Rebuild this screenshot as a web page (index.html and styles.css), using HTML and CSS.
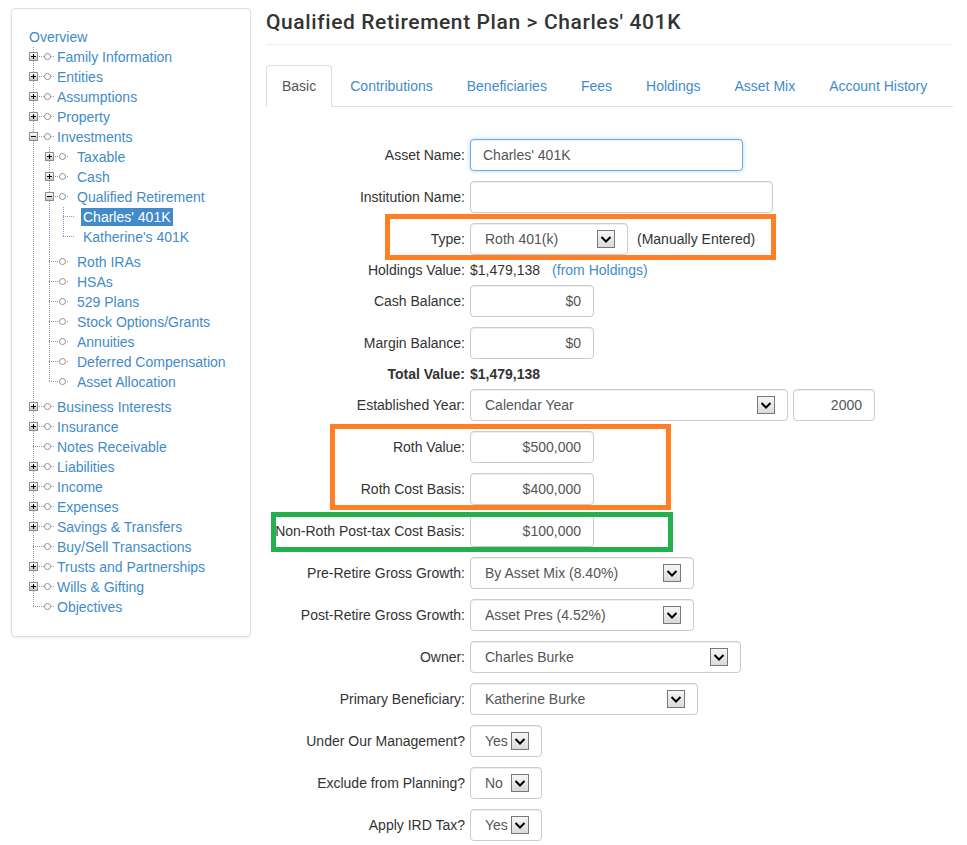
FILE: index.html
```html
<!DOCTYPE html>
<html lang="en">
<head>
    <meta charset="UTF-8">
    <meta name="viewport" content="width=device-width, initial-scale=1.0">
    <title>Qualified Retirement Plan - Charles' 401K</title>
    <link rel="stylesheet" href="styles.css">
</head>
<body>
<div class="page">
    <!-- Left navigation tree -->
    <nav class="sidebar">
        <a class="overview" href="#">Overview</a>
        <ul class="tree">
            <li><div class="node"><span class="lead"><i class="tog"></i><i class="knot"></i></span><a href="#">Family Information</a></div></li>
            <li><div class="node"><span class="lead"><i class="tog"></i><i class="knot"></i></span><a href="#">Entities</a></div></li>
            <li><div class="node"><span class="lead"><i class="tog"></i><i class="knot"></i></span><a href="#">Assumptions</a></div></li>
            <li><div class="node"><span class="lead"><i class="tog"></i><i class="knot"></i></span><a href="#">Property</a></div></li>
            <li>
                <div class="node"><span class="lead"><i class="tog open"></i><i class="knot"></i></span><a href="#">Investments</a></div>
                <ul>
                    <li><div class="node"><span class="lead"><i class="tog"></i><i class="knot"></i></span><a href="#">Taxable</a></div></li>
                    <li><div class="node"><span class="lead"><i class="tog"></i><i class="knot"></i></span><a href="#">Cash</a></div></li>
                    <li>
                        <div class="node"><span class="lead"><i class="tog open"></i><i class="knot"></i></span><a href="#">Qualified Retirement</a></div>
                        <ul>
                            <li><div class="node"><span class="lead"></span><a class="current" href="#">Charles' 401K</a></div></li>
                            <li><div class="node"><span class="lead"></span><a href="#">Katherine's 401K</a></div></li>
                        </ul>
                    </li>
                    <li><div class="node"><span class="lead"><i class="knot"></i></span><a href="#">Roth IRAs</a></div></li>
                    <li><div class="node"><span class="lead"><i class="knot"></i></span><a href="#">HSAs</a></div></li>
                    <li><div class="node"><span class="lead"><i class="knot"></i></span><a href="#">529 Plans</a></div></li>
                    <li><div class="node"><span class="lead"><i class="knot"></i></span><a href="#">Stock Options/Grants</a></div></li>
                    <li><div class="node"><span class="lead"><i class="knot"></i></span><a href="#">Annuities</a></div></li>
                    <li><div class="node"><span class="lead"><i class="knot"></i></span><a href="#">Deferred Compensation</a></div></li>
                    <li><div class="node"><span class="lead"><i class="knot"></i></span><a href="#">Asset Allocation</a></div></li>
                </ul>
            </li>
            <li><div class="node"><span class="lead"><i class="tog"></i><i class="knot"></i></span><a href="#">Business Interests</a></div></li>
            <li><div class="node"><span class="lead"><i class="tog"></i><i class="knot"></i></span><a href="#">Insurance</a></div></li>
            <li><div class="node"><span class="lead"><i class="knot"></i></span><a href="#">Notes Receivable</a></div></li>
            <li><div class="node"><span class="lead"><i class="tog"></i><i class="knot"></i></span><a href="#">Liabilities</a></div></li>
            <li><div class="node"><span class="lead"><i class="tog"></i><i class="knot"></i></span><a href="#">Income</a></div></li>
            <li><div class="node"><span class="lead"><i class="tog"></i><i class="knot"></i></span><a href="#">Expenses</a></div></li>
            <li><div class="node"><span class="lead"><i class="tog"></i><i class="knot"></i></span><a href="#">Savings &amp; Transfers</a></div></li>
            <li><div class="node"><span class="lead"><i class="knot"></i></span><a href="#">Buy/Sell Transactions</a></div></li>
            <li><div class="node"><span class="lead"><i class="tog"></i><i class="knot"></i></span><a href="#">Trusts and Partnerships</a></div></li>
            <li><div class="node"><span class="lead"><i class="tog"></i><i class="knot"></i></span><a href="#">Wills &amp; Gifting</a></div></li>
            <li><div class="node"><span class="lead"><i class="knot"></i></span><a href="#">Objectives</a></div></li>
        </ul>
    </nav>

    <main class="main">
        <h1 class="title">Qualified Retirement Plan &gt; Charles' 401K</h1>

        <ul class="tabs">
            <li class="active"><a href="#">Basic</a></li>
            <li><a href="#">Contributions</a></li>
            <li><a href="#">Beneficiaries</a></li>
            <li><a href="#">Fees</a></li>
            <li><a href="#">Holdings</a></li>
            <li><a href="#">Asset Mix</a></li>
            <li><a href="#">Account History</a></li>
        </ul>

        <form class="plan-form">
            <!-- review markers drawn over the form -->
            <div class="mark mark-type"></div>
            <div class="mark mark-roth"></div>
            <div class="mark green mark-nonroth"></div>

            <div class="field">
                <label>Asset Name:</label>
                <input class="ctl w-name focused" type="text" value="Charles' 401K">
            </div>
            <div class="field">
                <label>Institution Name:</label>
                <input class="ctl w-inst" type="text" value="">
            </div>
            <div class="field">
                <label>Type:</label>
                <div class="select w-type"><span class="value">Roth 401(k)</span><span class="caret"><svg viewBox="0 0 16 16" width="16" height="16"><path d="M3.5 6 8 10.5 12.5 6"/></svg></span></div>
                <span class="note">(Manually Entered)</span>
            </div>
            <div class="field static">
                <label>Holdings Value:</label>
                <span>$1,479,138</span>
                <a class="from" href="#">(from Holdings)</a>
            </div>
            <div class="field">
                <label>Cash Balance:</label>
                <input class="ctl num w-money" type="text" value="$0">
            </div>
            <div class="field">
                <label>Margin Balance:</label>
                <input class="ctl num w-money" type="text" value="$0">
            </div>
            <div class="field static total">
                <label>Total Value:</label>
                <span>$1,479,138</span>
            </div>
            <div class="field">
                <label>Established Year:</label>
                <div class="select w-basis"><span class="value">Calendar Year</span><span class="caret"><svg viewBox="0 0 16 16" width="16" height="16"><path d="M3.5 6 8 10.5 12.5 6"/></svg></span></div>
                <input class="ctl num w-year" type="text" value="2000">
            </div>
            <div class="field">
                <label>Roth Value:</label>
                <input class="ctl num w-money" type="text" value="$500,000">
            </div>
            <div class="field">
                <label>Roth Cost Basis:</label>
                <input class="ctl num w-money" type="text" value="$400,000">
            </div>
            <div class="field">
                <label>Non-Roth Post-tax Cost Basis:</label>
                <input class="ctl num w-money" type="text" value="$100,000">
            </div>
            <div class="field">
                <label>Pre-Retire Gross Growth:</label>
                <div class="select w-growth"><span class="value">By Asset Mix (8.40%)</span><span class="caret"><svg viewBox="0 0 16 16" width="16" height="16"><path d="M3.5 6 8 10.5 12.5 6"/></svg></span></div>
            </div>
            <div class="field">
                <label>Post-Retire Gross Growth:</label>
                <div class="select w-growth"><span class="value">Asset Pres (4.52%)</span><span class="caret"><svg viewBox="0 0 16 16" width="16" height="16"><path d="M3.5 6 8 10.5 12.5 6"/></svg></span></div>
            </div>
            <div class="field">
                <label>Owner:</label>
                <div class="select w-owner"><span class="value">Charles Burke</span><span class="caret"><svg viewBox="0 0 16 16" width="16" height="16"><path d="M3.5 6 8 10.5 12.5 6"/></svg></span></div>
            </div>
            <div class="field">
                <label>Primary Beneficiary:</label>
                <div class="select w-benef"><span class="value">Katherine Burke</span><span class="caret"><svg viewBox="0 0 16 16" width="16" height="16"><path d="M3.5 6 8 10.5 12.5 6"/></svg></span></div>
            </div>
            <div class="field">
                <label>Under Our Management?</label>
                <div class="select w-yn"><span class="value">Yes</span><span class="caret"><svg viewBox="0 0 16 16" width="16" height="16"><path d="M3.5 6 8 10.5 12.5 6"/></svg></span></div>
            </div>
            <div class="field">
                <label>Exclude from Planning?</label>
                <div class="select w-yn"><span class="value">No</span><span class="caret"><svg viewBox="0 0 16 16" width="16" height="16"><path d="M3.5 6 8 10.5 12.5 6"/></svg></span></div>
            </div>
            <div class="field">
                <label>Apply IRD Tax?</label>
                <div class="select w-yn"><span class="value">Yes</span><span class="caret"><svg viewBox="0 0 16 16" width="16" height="16"><path d="M3.5 6 8 10.5 12.5 6"/></svg></span></div>
            </div>
        </form>
    </main>
</div>
</body>
</html>
```

FILE: styles.css
```css
* {
    box-sizing: border-box;
}

body {
    margin: 0;
    background: #fff;
    color: #333;
    font-family: "Liberation Sans", Arial, sans-serif;
    font-size: 14px;
    line-height: 20px;
}

a {
    color: #428bca;
    text-decoration: none;
}

.page {
    display: flex;
    align-items: flex-start;
    gap: 15px;
    padding: 8px 14px 0 11px;
}

/* ---- sidebar tree ---- */

.sidebar {
    flex: none;
    width: 240px;
    border: 1px solid #ddd;
    border-radius: 4px;
    box-shadow: 0 1px 2px rgba(0, 0, 0, 0.08);
    padding: 18px 17px 19px;
}

.overview {
    display: block;
    line-height: 20px;
}

.tree,
.tree ul {
    list-style: none;
    margin: 0;
    padding: 0;
}

.tree li {
    background: repeating-linear-gradient(to bottom, #8c9db5 0 1px, transparent 1px 2px) 4px 0 / 1px 100% no-repeat;
}

.tree li:last-child {
    background-size: 1px 10px;
}

.tree ul {
    margin-left: 16px;
    padding-bottom: 5px;
}

.tree ul ul {
    margin-left: 14px;
}

.node {
    display: flex;
    align-items: flex-start;
    height: 20px;
}

.node a {
    margin-top: 1px;
    padding: 0 2px;
    line-height: 18px;
    white-space: nowrap;
}

.node a.current {
    background: #428bca;
    color: #fff;
}

.lead {
    flex: none;
    display: flex;
    align-items: flex-start;
    width: 26px;
    height: 20px;
    background: repeating-linear-gradient(to right, #8c9db5 0 1px, transparent 1px 2px) 4px 9px / 22px 1px no-repeat;
}

.tree ul .lead {
    width: 30px;
    background-size: 20px 1px;
}

.tree ul ul .lead {
    width: 22px;
    background-size: 12px 1px;
}

.tog {
    flex: none;
    width: 9px;
    height: 9px;
    margin-top: 5px;
    border: 1px solid #8e8e8e;
    background:
        linear-gradient(#000, #000) 50% 50% / 5px 1px no-repeat,
        linear-gradient(#000, #000) 50% 50% / 1px 5px no-repeat,
        linear-gradient(#fdfdfd, #c6c6c6);
}

.tog.open {
    background:
        linear-gradient(#000, #000) 50% 50% / 5px 1px no-repeat,
        linear-gradient(#fdfdfd, #c6c6c6);
}

.knot {
    flex: none;
    width: 7px;
    height: 7px;
    margin-top: 6px;
    border: 1px solid #8f8f8f;
    border-radius: 50%;
    background: #fff;
}

.tog + .knot {
    margin-left: 6px;
}

.lead > .knot:first-child {
    margin-left: 15px;
}

.tree ul .tog + .knot {
    margin-left: 5px;
}

.tree ul .lead > .knot:first-child {
    margin-left: 14px;
}

/* ---- main area ---- */

.main {
    flex: 1;
    min-width: 0;
}

.title {
    margin: 0;
    padding-bottom: 8px;
    border-bottom: 1px solid #eee;
    font-family: Roboto, "Liberation Sans", sans-serif;
    font-weight: 500;
    font-size: 21px;
    line-height: 28px;
    letter-spacing: 0.6px;
    color: #333;
}

.tabs {
    display: flex;
    list-style: none;
    margin: 20px 0 0;
    padding: 0;
    border-bottom: 1px solid #ddd;
}

.tabs li {
    margin-bottom: -1px;
}

.tabs a {
    display: block;
    margin-right: 2px;
    padding: 10px 15px;
    line-height: 20px;
    border: 1px solid transparent;
    border-radius: 4px 4px 0 0;
}

.tabs li.active a {
    color: #555;
    background: #fff;
    border-color: #ddd #ddd transparent;
}

/* ---- form ---- */

.plan-form {
    position: relative;
    margin-top: 32px;
}

.field {
    display: flex;
    align-items: center;
    height: 32px;
    margin-bottom: 10px;
}

.field:last-child {
    margin-bottom: 0;
}

.field.static {
    height: 20px;
    margin-top: -5px;
    margin-bottom: 5px;
}

.field > label {
    flex: none;
    width: 199px;
    margin-right: 5px;
    text-align: right;
}

.field.total {
    font-weight: bold;
}

.ctl {
    height: 32px;
    padding: 0 12px;
    border: 1px solid #ccc;
    border-radius: 4px;
    box-shadow: inset 0 1px 1px rgba(0, 0, 0, 0.075);
    font: inherit;
    color: #555;
    background: #fff;
}

.ctl.num {
    text-align: right;
}

.ctl.focused {
    border-color: #66afe9;
    outline: 0;
    box-shadow: inset 0 1px 1px rgba(0, 0, 0, 0.075), 0 0 4px rgba(102, 175, 233, 0.5);
}

.select {
    display: flex;
    align-items: center;
    height: 32px;
    padding: 0 12px 0 14px;
    border: 1px solid #ccc;
    border-radius: 4px;
    box-shadow: inset 0 1px 1px rgba(0, 0, 0, 0.075);
    color: #555;
}

.select .value {
    flex: 1;
    white-space: nowrap;
    overflow: hidden;
}

.caret {
    flex: none;
    display: flex;
    align-items: center;
    justify-content: center;
    width: 18px;
    height: 18px;
    border: 1px solid #777;
    background: linear-gradient(#f6f6f6, #dadada);
}

.caret path {
    fill: none;
    stroke: #000;
    stroke-width: 2;
}

.note {
    margin-left: 9px;
}

.from {
    margin-left: 12px;
}

.w-name { width: 273px; }
.w-inst { width: 303px; }
.w-type { width: 158px; }
.w-money { width: 124px; }
.w-basis { width: 318px; }
.w-year { width: 82px; margin-left: 5px; }
.w-growth { width: 224px; }
.w-owner { width: 271px; }
.w-benef { width: 228px; }
.w-yn { width: 72px; }

/* highlight boxes drawn on top of the form */
.mark {
    position: absolute;
    border: 5px solid #ff7f27;
    pointer-events: none;
}

.mark.green {
    border-color: #22b14c;
}

.mark-type {
    left: 119px;
    top: 75px;
    width: 391px;
    height: 46px;
}

.mark-roth {
    left: 64px;
    top: 285px;
    width: 341px;
    height: 86px;
}

.mark-nonroth {
    left: 5px;
    top: 373px;
    width: 402px;
    height: 40px;
}
```
